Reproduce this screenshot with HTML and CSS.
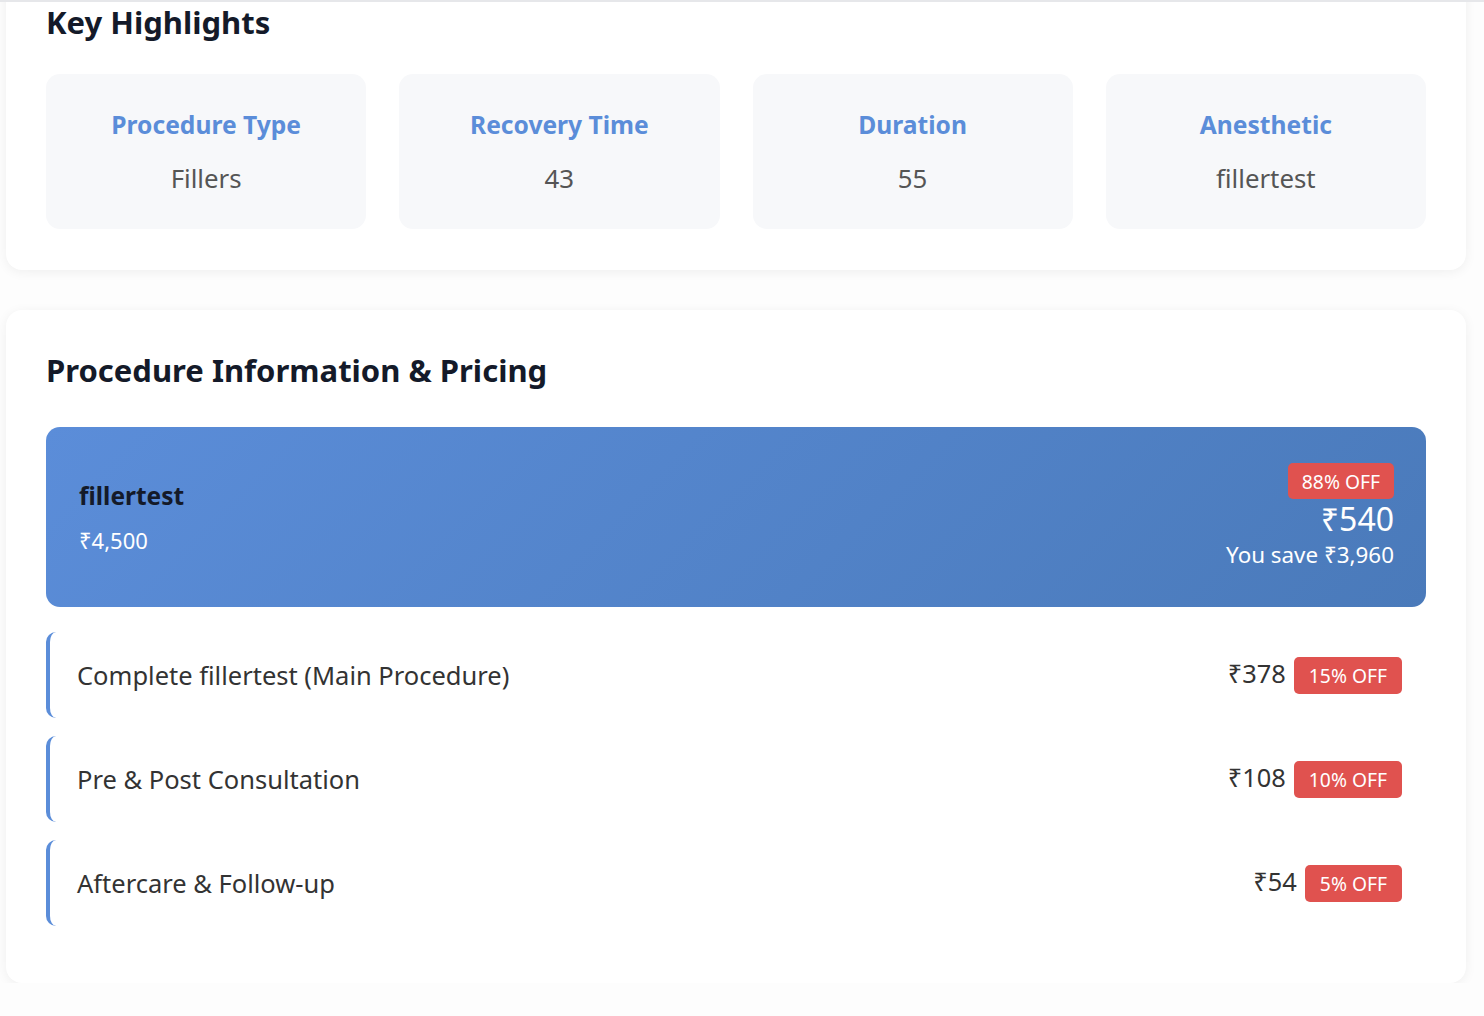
FILE: index.html
```html
<!DOCTYPE html>
<html lang="en">
<head>
<meta charset="utf-8">
<title>Procedure</title>
<link rel="stylesheet" href="styles.css">
</head>
<body>
<div class="topline"></div>
<main class="page">
  <section class="card card-highlights">
    <h2 class="card-title">Key Highlights</h2>
    <div class="highlights">
      <div class="hl">
        <div class="hl-label">Procedure Type</div>
        <div class="hl-value">Fillers</div>
      </div>
      <div class="hl">
        <div class="hl-label">Recovery Time</div>
        <div class="hl-value">43</div>
      </div>
      <div class="hl">
        <div class="hl-label">Duration</div>
        <div class="hl-value">55</div>
      </div>
      <div class="hl">
        <div class="hl-label">Anesthetic</div>
        <div class="hl-value">fillertest</div>
      </div>
    </div>
  </section>

  <section class="card card-pricing">
    <h2 class="card-title pricing-title">Procedure Information &amp; Pricing</h2>
    <div class="banner">
      <div class="banner-left">
        <div class="banner-name">fillertest</div>
        <div class="banner-orig">₹4,500</div>
      </div>
      <div class="banner-right">
        <span class="badge badge-lg">88% OFF</span>
        <div class="banner-price">₹540</div>
        <div class="banner-save">You save ₹3,960</div>
      </div>
    </div>
    <div class="items">
      <div class="item">
        <span class="item-name">Complete fillertest (Main Procedure)</span>
        <span class="item-price"><span class="amt">₹378</span><span class="badge">15% OFF</span></span>
      </div>
      <div class="item">
        <span class="item-name">Pre &amp; Post Consultation</span>
        <span class="item-price"><span class="amt">₹108</span><span class="badge">10% OFF</span></span>
      </div>
      <div class="item">
        <span class="item-name">Aftercare &amp; Follow-up</span>
        <span class="item-price"><span class="amt">₹54</span><span class="badge">5% OFF</span></span>
      </div>
    </div>
  </section>
</main>
</body>
</html>
```

FILE: styles.css
```css
* { box-sizing: border-box; }
html, body { margin: 0; padding: 0; }
body {
  background: #fdfdfd;
  font-family: "Noto Sans", "Open Sans", sans-serif;
  color: #333;
  overflow: hidden;
}
.topline {
  position: absolute;
  top: 0; left: 0; right: 0;
  height: 2px;
  background: #e6e7ea;
  z-index: 5;
}
.page {
  padding: 0 18px 0 6px;
  display: flex;
  flex-direction: column;
  gap: 40px;
}
.card {
  background: #fff;
  border-radius: 16px;
  box-shadow: 0 2px 12px rgba(0,0,0,0.06);
  padding: 40px;
}
.card-highlights {
  margin-top: -37px;
  padding-top: 37px;
  padding-bottom: 41px;
}
.card-title {
  margin: 0;
  font-size: 31px;
  font-weight: 700;
  color: #141a29;
  line-height: 44px;
}
.highlights {
  margin-top: 30px;
  display: grid;
  grid-template-columns: repeat(4, 1fr);
  gap: 33px;
}
.hl {
  background: #f7f8fa;
  border-radius: 14px;
  height: 155px;
  display: flex;
  flex-direction: column;
  align-items: center;
  justify-content: center;
  gap: 17px;
}
.hl-label {
  font-size: 24.6px;
  font-weight: 700;
  color: #5b8dd9;
  line-height: 36px;
}
.hl-value {
  font-size: 25.8px;
  color: #555;
  line-height: 36px;
}
.card-pricing {
  padding-top: 38px;
  padding-bottom: 57px;
}
.banner {
  margin-top: 35px;
  height: 180px;
  border-radius: 14px;
  background: linear-gradient(135deg, #5b8dd9 0%, #4a7aba 100%);
  display: flex;
  justify-content: space-between;
  align-items: center;
  padding: 0 32px 0 33px;
}
.banner-left {
  display: flex;
  flex-direction: column;
  gap: 10px;
}
.banner-name {
  font-size: 24.5px;
  font-weight: 700;
  color: #141a29;
  line-height: 36px;
}
.banner-orig {
  font-size: 22px;
  color: #fff;
  line-height: 32px;
}
.banner-right {
  display: flex;
  flex-direction: column;
  align-items: flex-end;
}
.banner-price {
  font-size: 32px;
  color: #fff;
  line-height: 40px;
}
.banner-save {
  font-size: 22.4px;
  color: #fff;
  line-height: 32px;
}
.badge {
  display: inline-flex;
  align-items: center;
  justify-content: center;
  background: #e0524f;
  color: #fff;
  font-size: 19.3px;
  border-radius: 5px;
  height: 37px;
  padding: 0 15px;
}
.badge-lg {
  height: 36px;
  padding: 0 14px;
}
.items {
  margin-top: 25px;
  display: flex;
  flex-direction: column;
  gap: 18px;
}
.item {
  height: 86px;
  border-left: 4px solid #5b8dd9;
  border-radius: 10px 0 0 10px;
  display: flex;
  align-items: center;
  justify-content: space-between;
  padding: 0 24px 0 27px;
}
.item-name {
  font-size: 25.5px;
  color: #333;
}
.item-price {
  display: flex;
  align-items: center;
  gap: 8px;
}
.amt {
  font-size: 25.4px;
  color: #333;
  position: relative;
  top: -2px;
}
```
